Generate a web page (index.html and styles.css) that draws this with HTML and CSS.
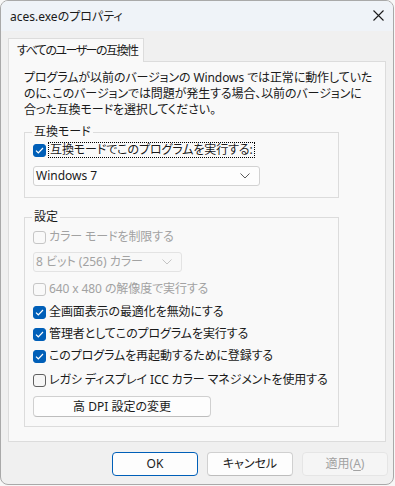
FILE: index.html
```html
<!DOCTYPE html>
<html lang="ja">
<head>
  <meta charset="UTF-8" />
  <title>aces.exeのプロパティ</title>
  <link rel="stylesheet" href="styles.css">
</head>
<body>
  <div class="window">
    <div class="titlebar">
      <span class="title">aces.exeのプロパティ</span>
      <span class="close" aria-label="閉じる">
        <svg width="11" height="11" viewBox="0 0 11 11"><path d="M0.5 0.5 L10.5 10.5 M10.5 0.5 L0.5 10.5" stroke="#1b1b1b" stroke-width="1.1" fill="none"/></svg>
      </span>
    </div>

    <div class="client">
      <div class="tabs">
        <div class="tab active">すべてのユーザーの互換性</div>
      </div>

      <div class="panel">
        <p class="intro">プログラムが以前のバージョンの Windows では正常に動作していた<br>のに、このバージョンでは問題が発生する場合、以前のバージョンに<br>合った互換モードを選択してください。</p>

        <!-- 互換モード -->
        <fieldset class="group group-compat">
          <legend>互換モード</legend>
          <div class="row">
            <span class="check checked"><svg width="9" height="7" viewBox="0 0 9 7"><path d="M1 3.6 L3.3 5.8 L8 1" stroke="#fff" stroke-width="1.2" fill="none"/></svg></span>
            <span class="label focus">互換モードでこのプログラムを実行する:</span>
          </div>
          <div class="select select-os">
            <span>Windows 7</span>
            <svg width="10" height="6" viewBox="0 0 10 6"><path d="M0.5 0.5 L5 5 L9.5 0.5" stroke="#5a5a5a" stroke-width="1" fill="none"/></svg>
          </div>
        </fieldset>

        <!-- 設定 -->
        <fieldset class="group group-settings">
          <legend>設定</legend>
          <div class="row disabled">
            <span class="check"></span>
            <span class="label">カラー モードを制限する</span>
          </div>
          <div class="select select-color disabled">
            <span>8 ビット (256) カラー</span>
            <svg width="10" height="6" viewBox="0 0 10 6"><path d="M0.5 0.5 L5 5 L9.5 0.5" stroke="#c4c4c4" stroke-width="1" fill="none"/></svg>
          </div>
          <div class="row disabled row-res">
            <span class="check"></span>
            <span class="label">640 x 480 の解像度で実行する</span>
          </div>
          <div class="row row-full">
            <span class="check checked"><svg width="9" height="7" viewBox="0 0 9 7"><path d="M1 3.6 L3.3 5.8 L8 1" stroke="#fff" stroke-width="1.2" fill="none"/></svg></span>
            <span class="label">全画面表示の最適化を無効にする</span>
          </div>
          <div class="row">
            <span class="check checked"><svg width="9" height="7" viewBox="0 0 9 7"><path d="M1 3.6 L3.3 5.8 L8 1" stroke="#fff" stroke-width="1.2" fill="none"/></svg></span>
            <span class="label">管理者としてこのプログラムを実行する</span>
          </div>
          <div class="row">
            <span class="check checked"><svg width="9" height="7" viewBox="0 0 9 7"><path d="M1 3.6 L3.3 5.8 L8 1" stroke="#fff" stroke-width="1.2" fill="none"/></svg></span>
            <span class="label">このプログラムを再起動するために登録する</span>
          </div>
          <div class="row row-icc">
            <span class="check"></span>
            <span class="label">レガシ ディスプレイ ICC カラー マネジメントを使用する</span>
          </div>
          <button class="btn btn-dpi" type="button">高 DPI 設定の変更</button>
        </fieldset>
      </div>

      <div class="footer">
        <button class="btn btn-default" type="button">OK</button>
        <button class="btn" type="button">キャンセル</button>
        <button class="btn" type="button" disabled>適用(<u>A</u>)</button>
      </div>
    </div>
  </div>
</body>
</html>
```

FILE: styles.css
```css
:root {
  --text: #1a1a1a;
  --muted: #a2a2a2;
  --accent: #005fb8;
  --line: #dcdcdc;
  --panel: #f9f9f9;
}
* { box-sizing: border-box; }
body {
  margin: 0;
  background: #f7f7f7;
  font-family: "Noto Sans", "Noto Sans CJK JP", sans-serif;
  font-size: 12px;
  color: var(--text);
  font-feature-settings: "palt";
}
.window {
  width: 394px;
  height: 485px;
  border: 1px solid #a9a9a9;
  border-radius: 8px;
  overflow: hidden;
  background: #f0f0f0;
  display: flex;
  flex-direction: column;
}
.titlebar {
  height: 30px;
  flex: none;
  background: #eff3f8;
  display: flex;
  align-items: center;
  justify-content: space-between;
  padding: 0 9px 0 9px;
}
.title {
  font-size: 12px;
  line-height: 14px;
  margin-top: 1px;
}
.close {
  display: flex;
  margin-top: -1px;
}
.client {
  flex: 1;
  display: flex;
  flex-direction: column;
  padding: 7px 7px 0 7px;
}
.tabs {
  display: flex;
  height: 24px;
}
.tab {
  width: 136px;
  height: 24px;
  background: var(--panel);
  border: 1px solid var(--line);
  border-bottom: none;
  padding: 4px 0 0 8px;
  line-height: 16px;
  font-size: 12px;
  letter-spacing: -1.5px;
  white-space: nowrap;
  position: relative;
  z-index: 1;
}
.panel {
  height: 381px;
  margin-top: -1px;
  background: var(--panel);
  border: 1px solid var(--line);
  padding: 8px 0 0 15px;
}
.intro {
  margin: 0;
  line-height: 16px;
  white-space: nowrap;
  letter-spacing: -0.1px;
}
.group {
  width: 315px;
  margin: 7px 0 0 0;
  padding: 0 8px 11px 8px;
  border: 1px solid var(--line);
  min-width: 0;
}
.group legend {
  padding: 0 2px;
  margin-left: -1px;
  line-height: 14px;
  font-size: 12px;
}
.group-settings {
  margin-top: 12px;
  padding-top: 2px;
  padding-bottom: 9px;
}
.row {
  height: 22px;
  display: flex;
  align-items: center;
  gap: 3px;
  white-space: nowrap;
}
.row .label {
  line-height: 14px;
  font-size: 12px;
  letter-spacing: -0.1px;
}
.row.disabled .label { color: var(--muted); }
.row-res { margin-top: 6px; }
.row-full { margin-top: 1px; }
.row-icc { margin-top: 2px; }
.check {
  width: 13px;
  height: 13px;
  flex: none;
  border: 1px solid #606060;
  border-radius: 3px;
  background: #f6f6f6;
  display: flex;
  align-items: center;
  justify-content: center;
}
.check.checked {
  background: var(--accent);
  border-color: var(--accent);
}
.row.disabled .check {
  border-color: #c6c6c6;
  background: #f9f9f9;
}
.label.focus {
  outline: 1px dotted #000;
  outline-offset: 0;
  padding: 0 1px;
}
.select {
  height: 20px;
  border: 1px solid #d2d2d2;
  border-radius: 3px;
  background: #fdfdfd;
  display: flex;
  align-items: center;
  justify-content: space-between;
  padding: 0 9px 0 2px;
  line-height: 14px;
}
.select-os {
  width: 227px;
  margin-top: 5px;
}
.select-color {
  width: 149px;
  margin-top: 4px;
}
.select.disabled {
  border-color: #e3e3e3;
  background: #f8f8f8;
  color: var(--muted);
}
.btn {
  font: inherit;
  font-size: 12px;
  color: var(--text);
  background: #fdfdfd;
  border: 1px solid #d0d0d0;
  border-bottom-color: #bdbdbd;
  border-radius: 4px;
  height: 24px;
  width: 86px;
  padding: 0;
  line-height: 14px;
}
.btn-dpi {
  width: 178px;
  height: 21px;
  margin-top: 5px;
  display: block;
}
.btn-default {
  border: 1px solid var(--accent);
}
.btn:disabled {
  color: var(--muted);
  background: #f5f5f5;
  border-color: #e5e5e5;
}
.btn u { text-underline-offset: 2px; }
.footer {
  display: flex;
  justify-content: flex-end;
  gap: 9px;
  margin-top: 10px;
  margin-right: -2px;
}
```
